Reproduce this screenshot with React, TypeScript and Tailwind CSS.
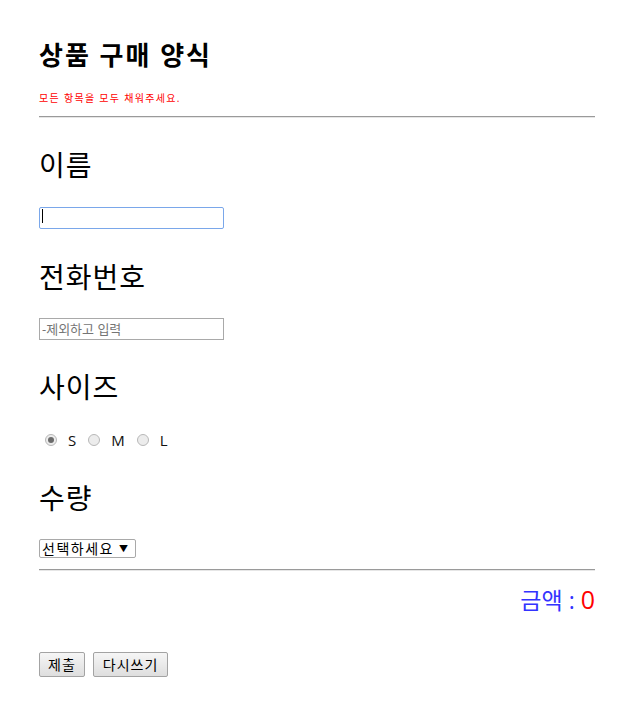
import { useState } from 'react'

const font = { fontFamily: '"Open Sans", "Noto Sans CJK KR", sans-serif' }

function Radio({ label, checked, onClick }: { label: string; checked: boolean; onClick: () => void }) {
  return (
    <button type="button" onClick={onClick} className="flex items-center gap-[11px] mr-[12px]">
      <span className="w-[12px] h-[12px] rounded-full border border-[#b8b8b8] bg-[#ececec] flex items-center justify-center">
        {checked && <span className="w-[6px] h-[6px] rounded-full bg-[#6b6b6b]" />}
      </span>
      <span className="text-[15px] text-[#111]">{label}</span>
    </button>
  )
}

export default function App() {
  const [size, setSize] = useState('S')
  const [name, setName] = useState('')
  const [phone, setPhone] = useState('')

  return (
    <div className="bg-white min-h-[704px] w-[630px] px-[39px] pt-[40px] text-black" style={font}>
      <h1 className="text-[26px] leading-[30px] font-bold tracking-[2px]">상품 구매 양식</h1>
      <p className="mt-[22px] text-[10px] leading-[12px] tracking-[1.3px] text-[#ff0000]">모든 항목을 모두 채워주세요.</p>
      <div className="mt-[12px] border-t border-b border-t-[#9a9a9a] border-b-[#e6e6e6] w-[556px]" />

      <h2 className="mt-[29px] text-[28px] leading-[36px] tracking-[1px]">이름</h2>
      <div className="relative mt-[22px] w-[185px] h-[22px]">
        <input
          value={name}
          onChange={(e) => setName(e.target.value)}
          className="w-full h-full border border-[#7aa7ea] rounded-[2px] px-[2px] text-[13px] outline-none"
        />
        {!name && <span className="absolute left-[3px] top-[4px] w-px h-[14px] bg-black" />}
      </div>

      <h2 className="mt-[32px] text-[28px] leading-[36px] tracking-[1px]">전화번호</h2>
      <input
        value={phone}
        onChange={(e) => setPhone(e.target.value)}
        placeholder="-제외하고 입력"
        className="block mt-[23px] w-[185px] h-[22px] border border-[#a9a9a9] px-[2px] text-[13px] placeholder:text-[#757575] outline-none"
      />

      <h2 className="mt-[29px] text-[28px] leading-[36px] tracking-[1px]">사이즈</h2>
      <div className="mt-[25px] h-[20px] flex items-center pl-[6px]">
        {['S', 'M', 'L'].map((s) => (
          <Radio key={s} label={s} checked={size === s} onClick={() => setSize(s)} />
        ))}
      </div>

      <h2 className="mt-[30px] text-[28px] leading-[36px] tracking-[1px]">수량</h2>
      <div className="mt-[23px] w-[97px] h-[19px] border border-[#a9a9a9] rounded-[2px] flex items-center pl-[2px] text-[14px] leading-none">
        <span className="tracking-[1.5px]">선택하세요</span>
        <span className="ml-[5px] text-[9px]">▼</span>
      </div>
      <div className="mt-[11px] border-t border-b border-t-[#9a9a9a] border-b-[#e6e6e6] w-[556px]" />

      <div className="mt-[14px] h-[30px] w-[556px] flex items-center justify-end">
        <span className="text-[23px] text-[#3333ff]">금액 : </span>
        <span className="ml-[6px] text-[25px] text-[#ff0000]">0</span>
      </div>

      <div className="mt-[37px] flex gap-[8px]">
        <button className="h-[25px] px-[8px] border border-[#a3a3a3] rounded-[2px] bg-gradient-to-b from-[#f6f6f6] to-[#dedede] text-[14px] tracking-[1px]">제출</button>
        <button className="h-[25px] px-[9px] border border-[#a3a3a3] rounded-[2px] bg-gradient-to-b from-[#f6f6f6] to-[#dedede] text-[14px] tracking-[1px]">다시쓰기</button>
      </div>
    </div>
  )
}
